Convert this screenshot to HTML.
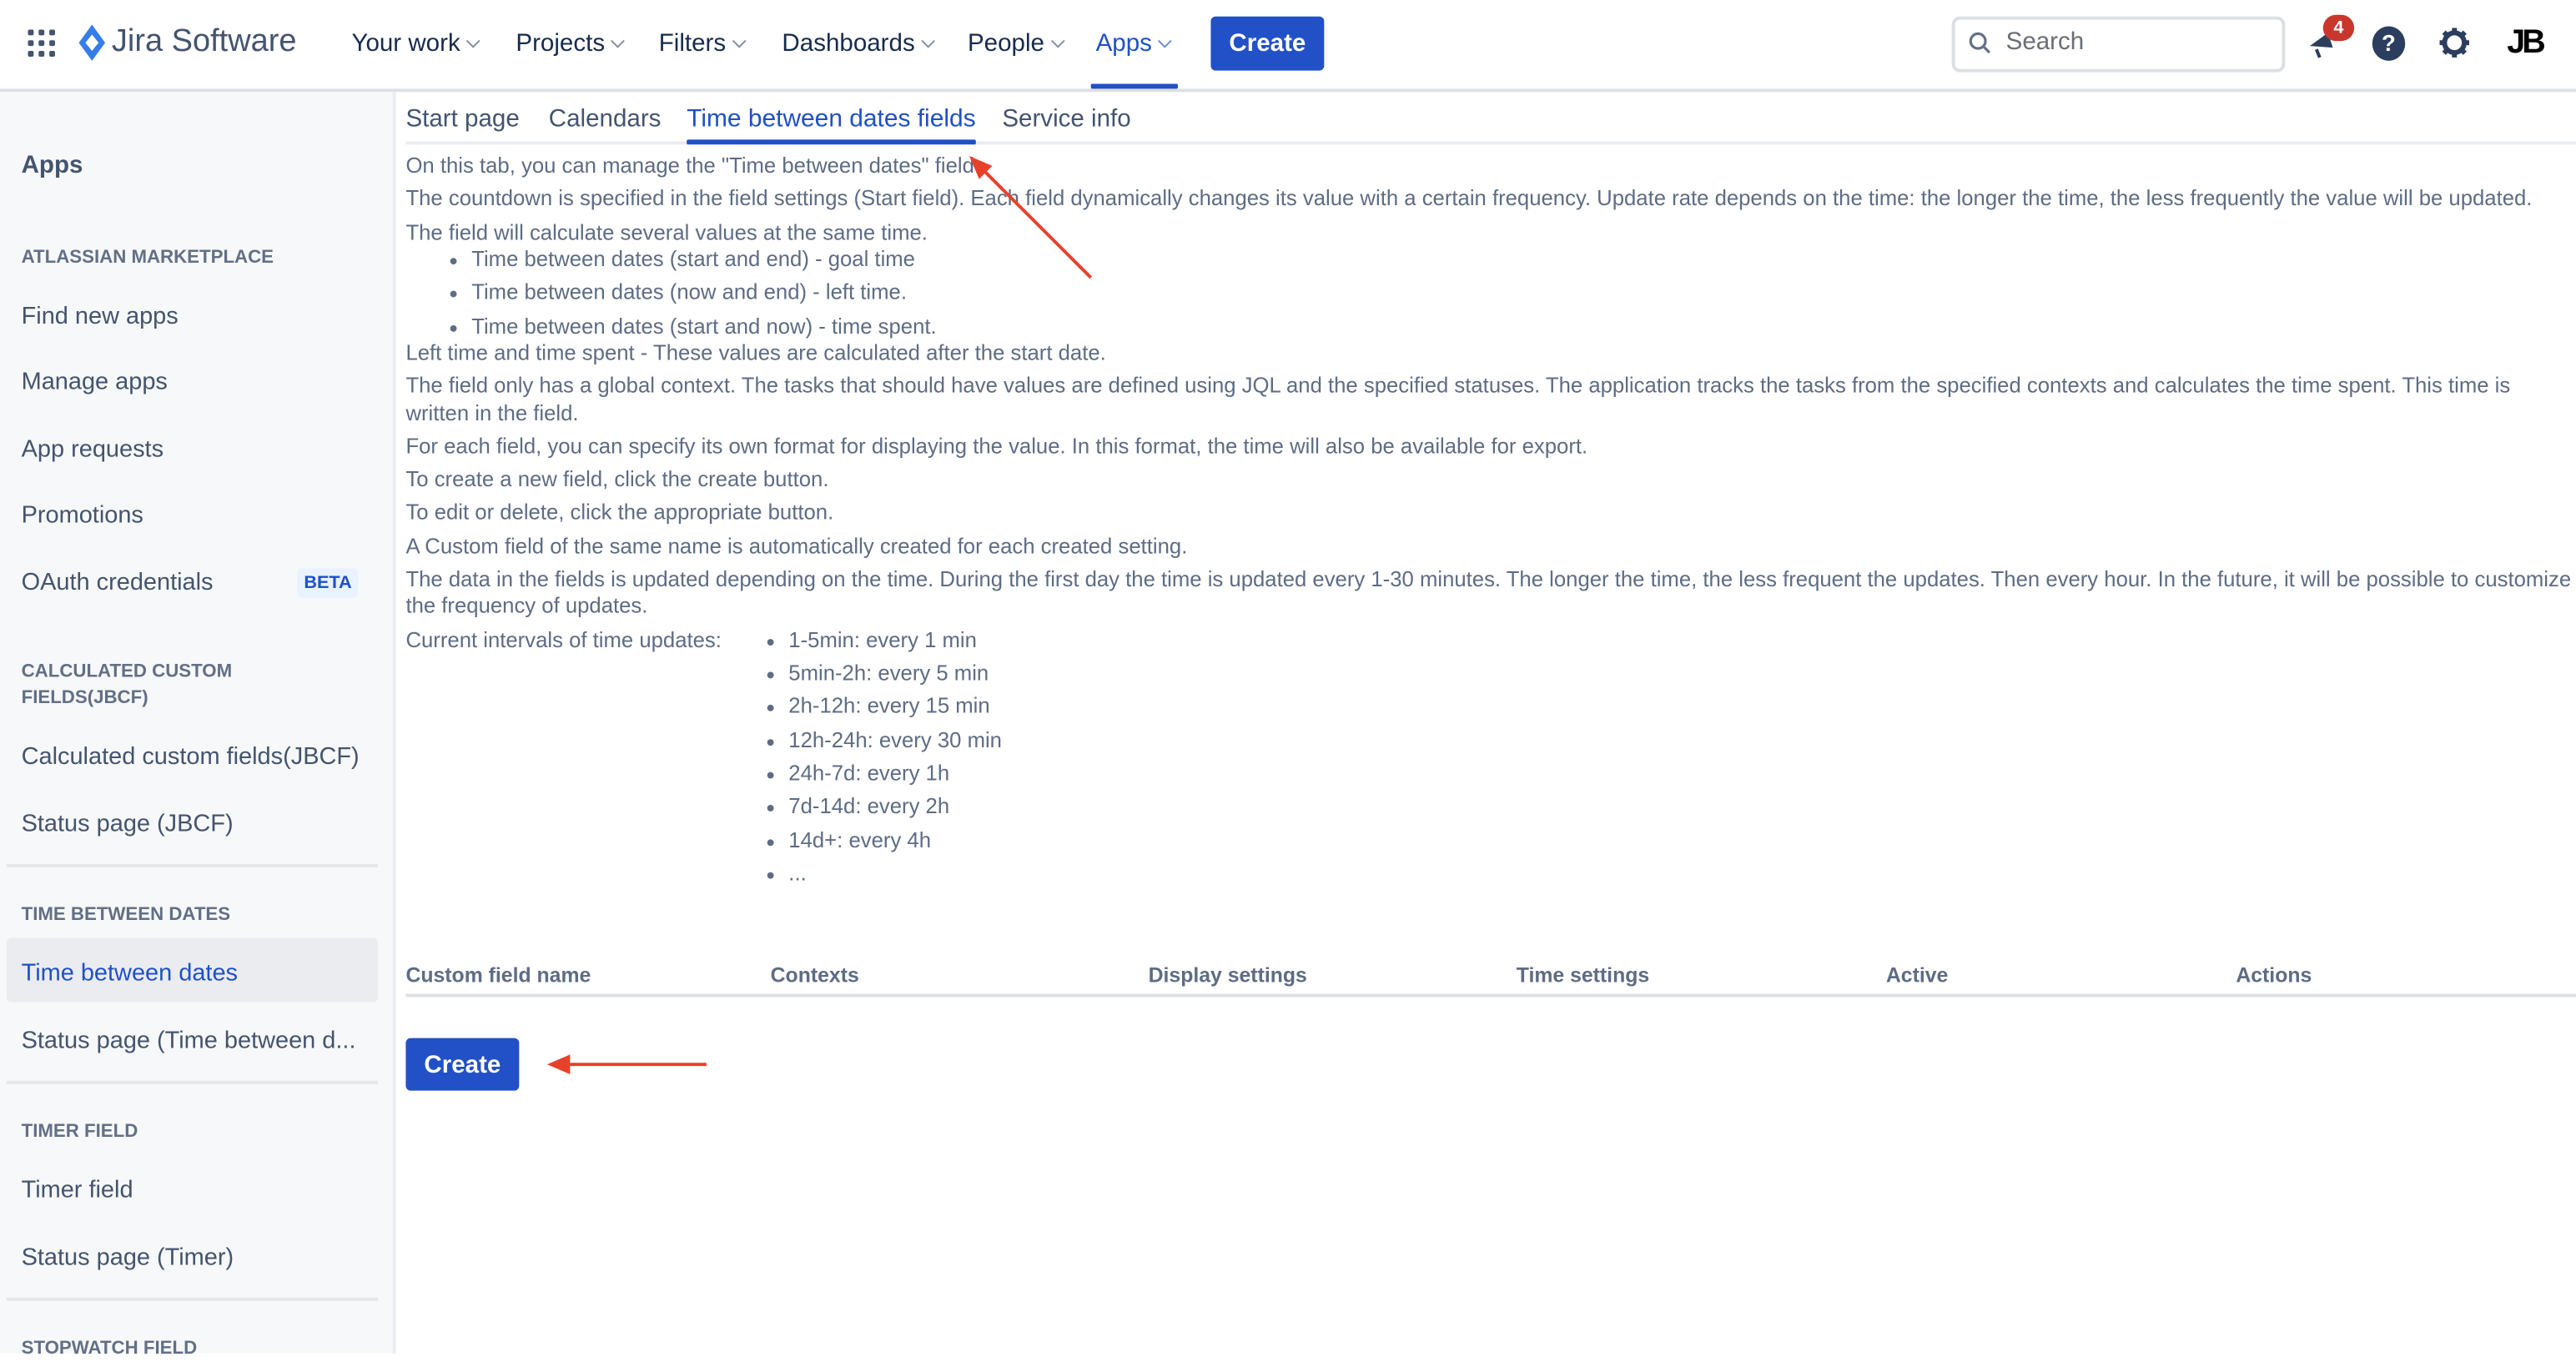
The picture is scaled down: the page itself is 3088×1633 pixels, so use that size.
<!DOCTYPE html>
<html><head><meta charset="utf-8"><style>
html,body{margin:0;padding:0;width:3088px;height:1622px;overflow:hidden;background:#fff}
#w{position:absolute;left:0;top:0;width:1568px;height:824px;transform:scale(1.96939);transform-origin:0 0;font-family:"Liberation Sans",sans-serif;color:#44546f}
.a{position:absolute;white-space:nowrap;line-height:16px}
.nav{font-size:15px;color:#172b4d;top:19px}
.chev{display:inline-block;width:5px;height:5px;border-right:1.5px solid #8590a2;border-bottom:1.5px solid #8590a2;transform:rotate(45deg);margin-left:5px;position:relative;top:-3px}
.side{font-size:14.7px;color:#44546f}
.sh{font-size:11.3px;font-weight:bold;color:#626f86;line-height:16px}
.t{font-size:13.05px;color:#5e6c84}
.li::before{content:"";position:absolute;left:-13px;top:7px;width:4px;height:4px;border-radius:50%;background:#5e6c84}
.th{font-size:12.6px;font-weight:bold;color:#5e6c84;top:586px}
.sep{position:absolute;left:4px;width:226px;height:2px;background:#e4e6ea}
</style></head><body><div id="w">
<div style="position:absolute;left:0;top:0;width:1568px;height:54px;border-bottom:2px solid #dcdfe4;background:#fff"></div>
<svg style="position:absolute;left:17px;top:18px" width="17" height="17" viewBox="0 0 17 17" fill="#44546f"><rect x="0" y="0" width="3.5" height="3.5" rx="1"/><rect x="6.5" y="0" width="3.5" height="3.5" rx="1"/><rect x="13" y="0" width="3.5" height="3.5" rx="1"/><rect x="0" y="6.5" width="3.5" height="3.5" rx="1"/><rect x="6.5" y="6.5" width="3.5" height="3.5" rx="1"/><rect x="13" y="6.5" width="3.5" height="3.5" rx="1"/><rect x="0" y="13" width="3.5" height="3.5" rx="1"/><rect x="6.5" y="13" width="3.5" height="3.5" rx="1"/><rect x="13" y="13" width="3.5" height="3.5" rx="1"/></svg>
<svg style="position:absolute;left:47px;top:15px" width="18" height="22" viewBox="0 0 18 22"><path d="M9 0L17 11L9 22L1 11Z" fill="#357de8"/><path d="M9 6L13 11L9 16L5 11Z" fill="#fff"/></svg>
<div class="a" style="left:68px;top:16px;font-size:19.3px;line-height:20px;color:#44546f">Jira Software</div>
<div class="a nav" style="left:214px">Your work<span class="chev"></span></div>
<div class="a nav" style="left:314px">Projects<span class="chev"></span></div>
<div class="a nav" style="left:401px">Filters<span class="chev"></span></div>
<div class="a nav" style="left:476px">Dashboards<span class="chev"></span></div>
<div class="a nav" style="left:589px">People<span class="chev"></span></div>
<div class="a nav" style="left:667px;color:#1f50c8">Apps<span class="chev" style="border-color:#6b8fd9"></span></div>
<div style="position:absolute;left:664px;top:51px;width:53px;height:3px;background:#1f50c8;border-radius:1px"></div>
<div style="position:absolute;left:737px;top:10px;width:69px;height:33px;background:#2250c6;border-radius:3px;color:#fff;font-size:15px;font-weight:bold;text-align:center;line-height:33px">Create</div>
<div style="position:absolute;left:1188px;top:10px;width:199px;height:30px;border:2px solid #dcdfe4;border-radius:5px"></div>
<svg style="position:absolute;left:1198px;top:19px" width="14" height="14" viewBox="0 0 14 14" fill="none" stroke="#626f86" stroke-width="1.6"><circle cx="6" cy="6" r="4.5"/><path d="M9.3 9.3L13 13"/></svg>
<div class="a" style="left:1221px;top:18px;font-size:15px;color:#6b6e76">Search</div>
<svg style="position:absolute;left:1404px;top:15px" width="22" height="22" viewBox="0 0 22 22"><path d="M2 13L13 5L16 14Z" fill="#2c3e5d"/><path d="M6 15L8 20" stroke="#2c3e5d" stroke-width="2"/></svg>
<div style="position:absolute;left:1414px;top:9px;width:19px;height:16px;border-radius:8px;background:#c9372c;color:#fff;font-size:11px;font-weight:bold;text-align:center;line-height:16px">4</div>
<div style="position:absolute;left:1444px;top:16px;width:20px;height:21px;border-radius:50%;background:#2c3e5d;color:#fff;font-size:14px;font-weight:bold;text-align:center;line-height:21px">?</div>
<svg style="position:absolute;left:1484px;top:16px" width="20" height="20" viewBox="0 0 20 20"><circle cx="10" cy="10" r="6" fill="none" stroke="#2c3e5d" stroke-width="3"/><g stroke="#2c3e5d" stroke-width="3"><path d="M10 1V4M10 16V19M1 10H4M16 10H19M3.6 3.6L5.7 5.7M14.3 14.3L16.4 16.4M3.6 16.4L5.7 14.3M14.3 5.7L16.4 3.6"/></g></svg>
<div class="a" style="left:1526px;top:15px;font-size:20px;line-height:22px;font-weight:bold;color:#000;letter-spacing:-2px">JB</div>
<div style="position:absolute;left:0;top:56px;width:239px;height:768px;background:#f7f8f9;border-right:2px solid #ebecf0"></div>
<div class="a" style="left:13px;top:93px;font-size:15px;font-weight:bold;color:#44546f">Apps</div>
<div class="a sh" style="left:13px;top:149px">ATLASSIAN MARKETPLACE</div>
<div class="a side" style="left:13px;top:185px">Find new apps</div>
<div class="a side" style="left:13px;top:225px">Manage apps</div>
<div class="a side" style="left:13px;top:266px">App requests</div>
<div class="a side" style="left:13px;top:306px">Promotions</div>
<div class="a side" style="left:13px;top:347px">OAuth credentials</div>
<div class="a" style="left:181px;top:346px;font-size:11px;font-weight:bold;color:#1f50c8;background:#e9f2ff;padding:1px 4px;border-radius:3px">BETA</div>
<div class="a sh" style="left:13px;top:401px;white-space:normal;width:170px">CALCULATED CUSTOM FIELDS(JBCF)</div>
<div class="a side" style="left:13px;top:453px">Calculated custom fields(JBCF)</div>
<div class="a side" style="left:13px;top:494px">Status page (JBCF)</div>
<div class="sep" style="top:526px"></div>
<div class="a sh" style="left:13px;top:549px">TIME BETWEEN DATES</div>
<div style="position:absolute;left:4px;top:571px;width:226px;height:39px;background:#ebecf0;border-radius:3px"></div>
<div class="a side" style="left:13px;top:585px;color:#1f50c8">Time between dates</div>
<div class="a side" style="left:13px;top:626px">Status page (Time between d...</div>
<div class="sep" style="top:658px"></div>
<div class="a sh" style="left:13px;top:681px">TIMER FIELD</div>
<div class="a side" style="left:13px;top:717px">Timer field</div>
<div class="a side" style="left:13px;top:758px">Status page (Timer)</div>
<div class="sep" style="top:790px"></div>
<div class="a sh" style="left:13px;top:813px">STOPWATCH FIELD</div>
<div class="a" style="left:247px;top:65px;font-size:15px;color:#44546f">Start page</div>
<div class="a" style="left:334px;top:65px;font-size:15px;color:#44546f">Calendars</div>
<div class="a" style="left:418px;top:65px;font-size:15.2px;color:#1f50c8">Time between dates fields</div>
<div class="a" style="left:610px;top:65px;font-size:15px;color:#44546f">Service info</div>
<div style="position:absolute;left:247px;top:86px;width:1321px;height:2px;background:#ebecf0"></div>
<div style="position:absolute;left:418px;top:85px;width:176px;height:3px;background:#1f50c8;border-radius:1px"></div>
<div class="a t" style="left:247px;top:93px">On this tab, you can manage the "Time between dates" field.</div>
<div class="a t" style="left:247px;top:113px">The countdown is specified in the field settings (Start field). Each field dynamically changes its value with a certain frequency. Update rate depends on the time: the longer the time, the less frequently the value will be updated.</div>
<div class="a t" style="left:247px;top:134px">The field will calculate several values at the same time.</div>
<div class="a t li" style="left:287px;top:150px">Time between dates (start and end) - goal time</div>
<div class="a t li" style="left:287px;top:170px">Time between dates (now and end) - left time.</div>
<div class="a t li" style="left:287px;top:191px">Time between dates (start and now) - time spent.</div>
<div class="a t" style="left:247px;top:207px">Left time and time spent - These values are calculated after the start date.</div>
<div class="a t" style="left:247px;top:227px">The field only has a global context. The tasks that should have values are defined using JQL and the specified statuses. The application tracks the tasks from the specified contexts and calculates the time spent. This time is</div>
<div class="a t" style="left:247px;top:244px">written in the field.</div>
<div class="a t" style="left:247px;top:264px">For each field, you can specify its own format for displaying the value. In this format, the time will also be available for export.</div>
<div class="a t" style="left:247px;top:284px">To create a new field, click the create button.</div>
<div class="a t" style="left:247px;top:304px">To edit or delete, click the appropriate button.</div>
<div class="a t" style="left:247px;top:325px">A Custom field of the same name is automatically created for each created setting.</div>
<div class="a t" style="left:247px;top:345px">The data in the fields is updated depending on the time. During the first day the time is updated every 1-30 minutes. The longer the time, the less frequent the updates. Then every hour. In the future, it will be possible to customize</div>
<div class="a t" style="left:247px;top:361px">the frequency of updates.</div>
<div class="a t" style="left:247px;top:382px">Current intervals of time updates:</div>
<div class="a t li" style="left:480px;top:382px">1-5min: every 1 min</div>
<div class="a t li" style="left:480px;top:402px">5min-2h: every 5 min</div>
<div class="a t li" style="left:480px;top:422px">2h-12h: every 15 min</div>
<div class="a t li" style="left:480px;top:443px">12h-24h: every 30 min</div>
<div class="a t li" style="left:480px;top:463px">24h-7d: every 1h</div>
<div class="a t li" style="left:480px;top:483px">7d-14d: every 2h</div>
<div class="a t li" style="left:480px;top:504px">14d+: every 4h</div>
<div class="a t li" style="left:480px;top:524px">...</div>
<div class="a th" style="left:247px">Custom field name</div>
<div class="a th" style="left:469px">Contexts</div>
<div class="a th" style="left:699px">Display settings</div>
<div class="a th" style="left:923px">Time settings</div>
<div class="a th" style="left:1148px">Active</div>
<div class="a th" style="left:1361px">Actions</div>
<div style="position:absolute;left:247px;top:605px;width:1321px;height:2px;background:#dfe1e6"></div>
<div style="position:absolute;left:247px;top:632px;width:69px;height:32px;background:#2250c6;border-radius:3px;color:#fff;font-size:15px;font-weight:bold;text-align:center;line-height:33px">Create</div>
<svg style="position:absolute;left:0;top:0" width="1568" height="824"><g stroke="#e8412b" stroke-width="2" fill="#e8412b"><path d="M430 648H344"/><path d="M333 648L347 642V654Z" stroke="none"/><path d="M664 169L597 102"/><path d="M590 95L604 101L596 109Z" stroke="none"/></g></svg>
</div></body></html>
